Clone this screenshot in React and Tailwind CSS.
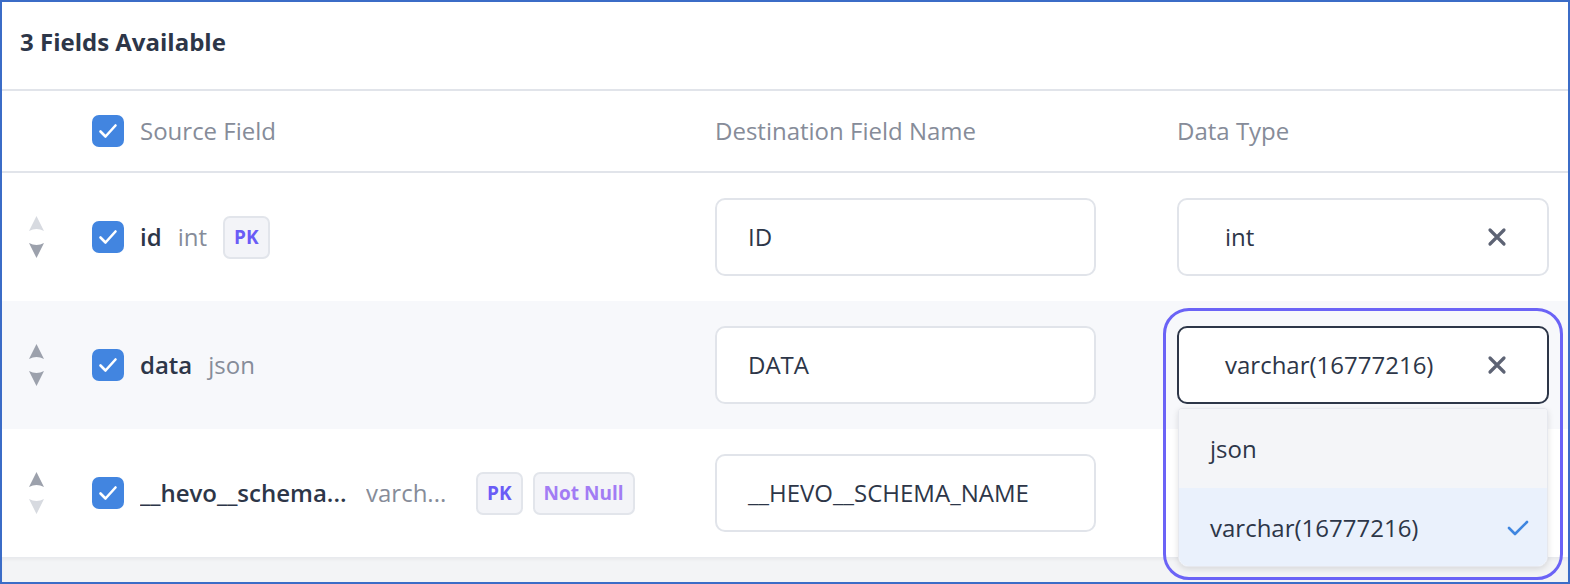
import React from "react";

const font = { fontFamily: '"Open Sans", "Noto Sans", sans-serif' };

function Arrow({ dir, light }) {
  return (
    <svg width="15" height="16" viewBox="0 0 15 16" className={dir === "down" ? "rotate-180" : ""}>
      <path d="M7.5 0 L15 15 Q7.5 11 0 15 Z" fill={light ? "#d7dae0" : "#9ca1ac"} />
    </svg>
  );
}

function Sorter({ upLight, downLight }) {
  return (
    <div className="w-[68px] flex flex-col items-center gap-[10px]">
      <Arrow dir="up" light={upLight} />
      <Arrow dir="down" light={downLight} />
    </div>
  );
}

function Checkbox() {
  return (
    <div className="w-8 h-8 rounded-[7px] bg-[#4285e0] flex items-center justify-center shrink-0">
      <svg width="22" height="22" viewBox="0 0 22 22" fill="none">
        <path d="M3.5 11.5 L8.5 16.5 L18.5 5.5" stroke="white" strokeWidth="2.6" strokeLinecap="round" strokeLinejoin="round" />
      </svg>
    </div>
  );
}

function Badge({ children, color }) {
  return (
    <div className={`h-[43px] px-[9px] rounded-[7px] border-2 border-[#e2e5eb] bg-[#f3f4f8] flex items-center text-[19px] font-bold ${color}`}>
      {children}
    </div>
  );
}

function XIcon() {
  return (
    <svg width="20" height="20" viewBox="0 0 20 20" fill="none">
      <path d="M3 3 L17 17 M17 3 L3 17" stroke="#5d6374" strokeWidth="3.2" strokeLinecap="round" />
    </svg>
  );
}

function DestInput({ value }) {
  return (
    <div className="w-[381px] h-[78px] rounded-[10px] border-2 border-[#e1e4ea] bg-white flex items-center pl-[31px] text-[24px] font-medium text-[#2d3648]">
      {value}
    </div>
  );
}

function TypeInput({ value, active }) {
  return (
    <div
      className={`w-[372px] h-[78px] rounded-[10px] border-2 bg-white flex items-center pl-[46px] pr-[40px] justify-between text-[24px] font-medium text-[#2d3648] ${
        active ? "border-[#2d3648]" : "border-[#e1e4ea]"
      }`}
    >
      <span>{value}</span>
      <XIcon />
    </div>
  );
}

function Row({ bg, upLight, downLight, name, type, badges, dest, typeCell, nameCls, typeCls }) {
  return (
    <div className={`h-[128px] flex items-center ${bg}`}>
      <div className="w-[713px] flex items-center">
        <Sorter upLight={upLight} downLight={downLight} />
        <div className="ml-[22px]">
          <Checkbox />
        </div>
        <div className={`ml-[16px] text-[24px] font-semibold text-[#2d3648] whitespace-nowrap ${nameCls}`}>{name}</div>
        <div className={`text-[24px] text-[#868c99] whitespace-nowrap ${typeCls}`}>{type}</div>
        <div className="flex gap-[10px]">{badges}</div>
      </div>
      <DestInput value={dest} />
      <div className="ml-[81px] relative">{typeCell}</div>
    </div>
  );
}

export default function App() {
  return (
    <div style={font} className="w-[1570px] h-[584px] border-2 border-[#3b6cc7] bg-white flex flex-col overflow-hidden">
      <div className="h-[87px] flex items-center pl-[18px] pb-[8px] text-[24px] font-bold text-[#2d3648] shrink-0">
        3 Fields Available
      </div>
      <div className="h-[2px] bg-[#e1e4ea] shrink-0" />
      <div className="h-[80px] flex items-center shrink-0">
        <div className="w-[713px] flex items-center">
          <div className="w-[68px]" />
          <div className="ml-[22px]">
            <Checkbox />
          </div>
          <div className="ml-[16px] text-[24px] text-[#868c99]">Source Field</div>
        </div>
        <div className="w-[381px] text-[24px] text-[#868c99]">Destination Field Name</div>
        <div className="ml-[81px] text-[24px] text-[#868c99]">Data Type</div>
      </div>
      <div className="h-[2px] bg-[#e1e4ea] shrink-0" />
      <Row
        bg="bg-white"
        upLight
        name="id"
        nameCls=""
        type="int"
        typeCls="ml-[16px] mr-[16px]"
        badges={<Badge color="text-[#6a5cf6]">PK</Badge>}
        dest="ID"
        typeCell={<TypeInput value="int" />}
      />
      <Row
        bg="bg-[#f7f8fb]"
        name="data"
        nameCls=""
        type="json"
        typeCls="ml-[16px]"
        dest="DATA"
        typeCell={
          <>
            <TypeInput value="varchar(16777216)" active />
            <div className="absolute left-[-14px] right-[-14px] top-[-18px] h-[272px] rounded-[26px] border-[3px] border-[#6b63f6] pointer-events-none z-20" />
            <div className="absolute left-[1px] right-[1px] top-[82px] h-[159px] rounded-b-[10px] rounded-t-[4px] overflow-hidden bg-white shadow-[0_2px_6px_rgba(0,0,0,0.12)] border border-[#e6e8ee] z-10 text-[24px] font-medium text-[#2d3648]">
              <div className="h-[79px] bg-[#f4f5f8] flex items-center pl-[31px]">json</div>
              <div className="h-[80px] bg-[#eaf1fc] flex items-center justify-between pl-[31px] pr-[18px]">
                <span>varchar(16777216)</span>
                <svg width="22" height="16" viewBox="0 0 22 16" fill="none">
                  <path d="M2 8 L8 14 L20 2" stroke="#3f86e0" strokeWidth="2.6" strokeLinecap="round" strokeLinejoin="round" />
                </svg>
              </div>
            </div>
          </>
        }
      />
      <Row
        bg="bg-white"
        downLight
        name="__hevo__schema..."
        nameCls="w-[226px] overflow-hidden"
        type="varch..."
        typeCls="w-[110px] overflow-hidden"
        badges={
          <>
            <Badge color="text-[#6a5cf6]">PK</Badge>
            <Badge color="text-[#a27cf4]">Not Null</Badge>
          </>
        }
        dest="__HEVO__SCHEMA_NAME"
        typeCell={<div className="w-[372px] h-[78px]" />}
      />
      <div className="flex-1 bg-[#f3f4f6] border-t border-[#e8eaee] shadow-[inset_0_2px_3px_rgba(0,0,0,0.04)]" />
    </div>
  );
}
